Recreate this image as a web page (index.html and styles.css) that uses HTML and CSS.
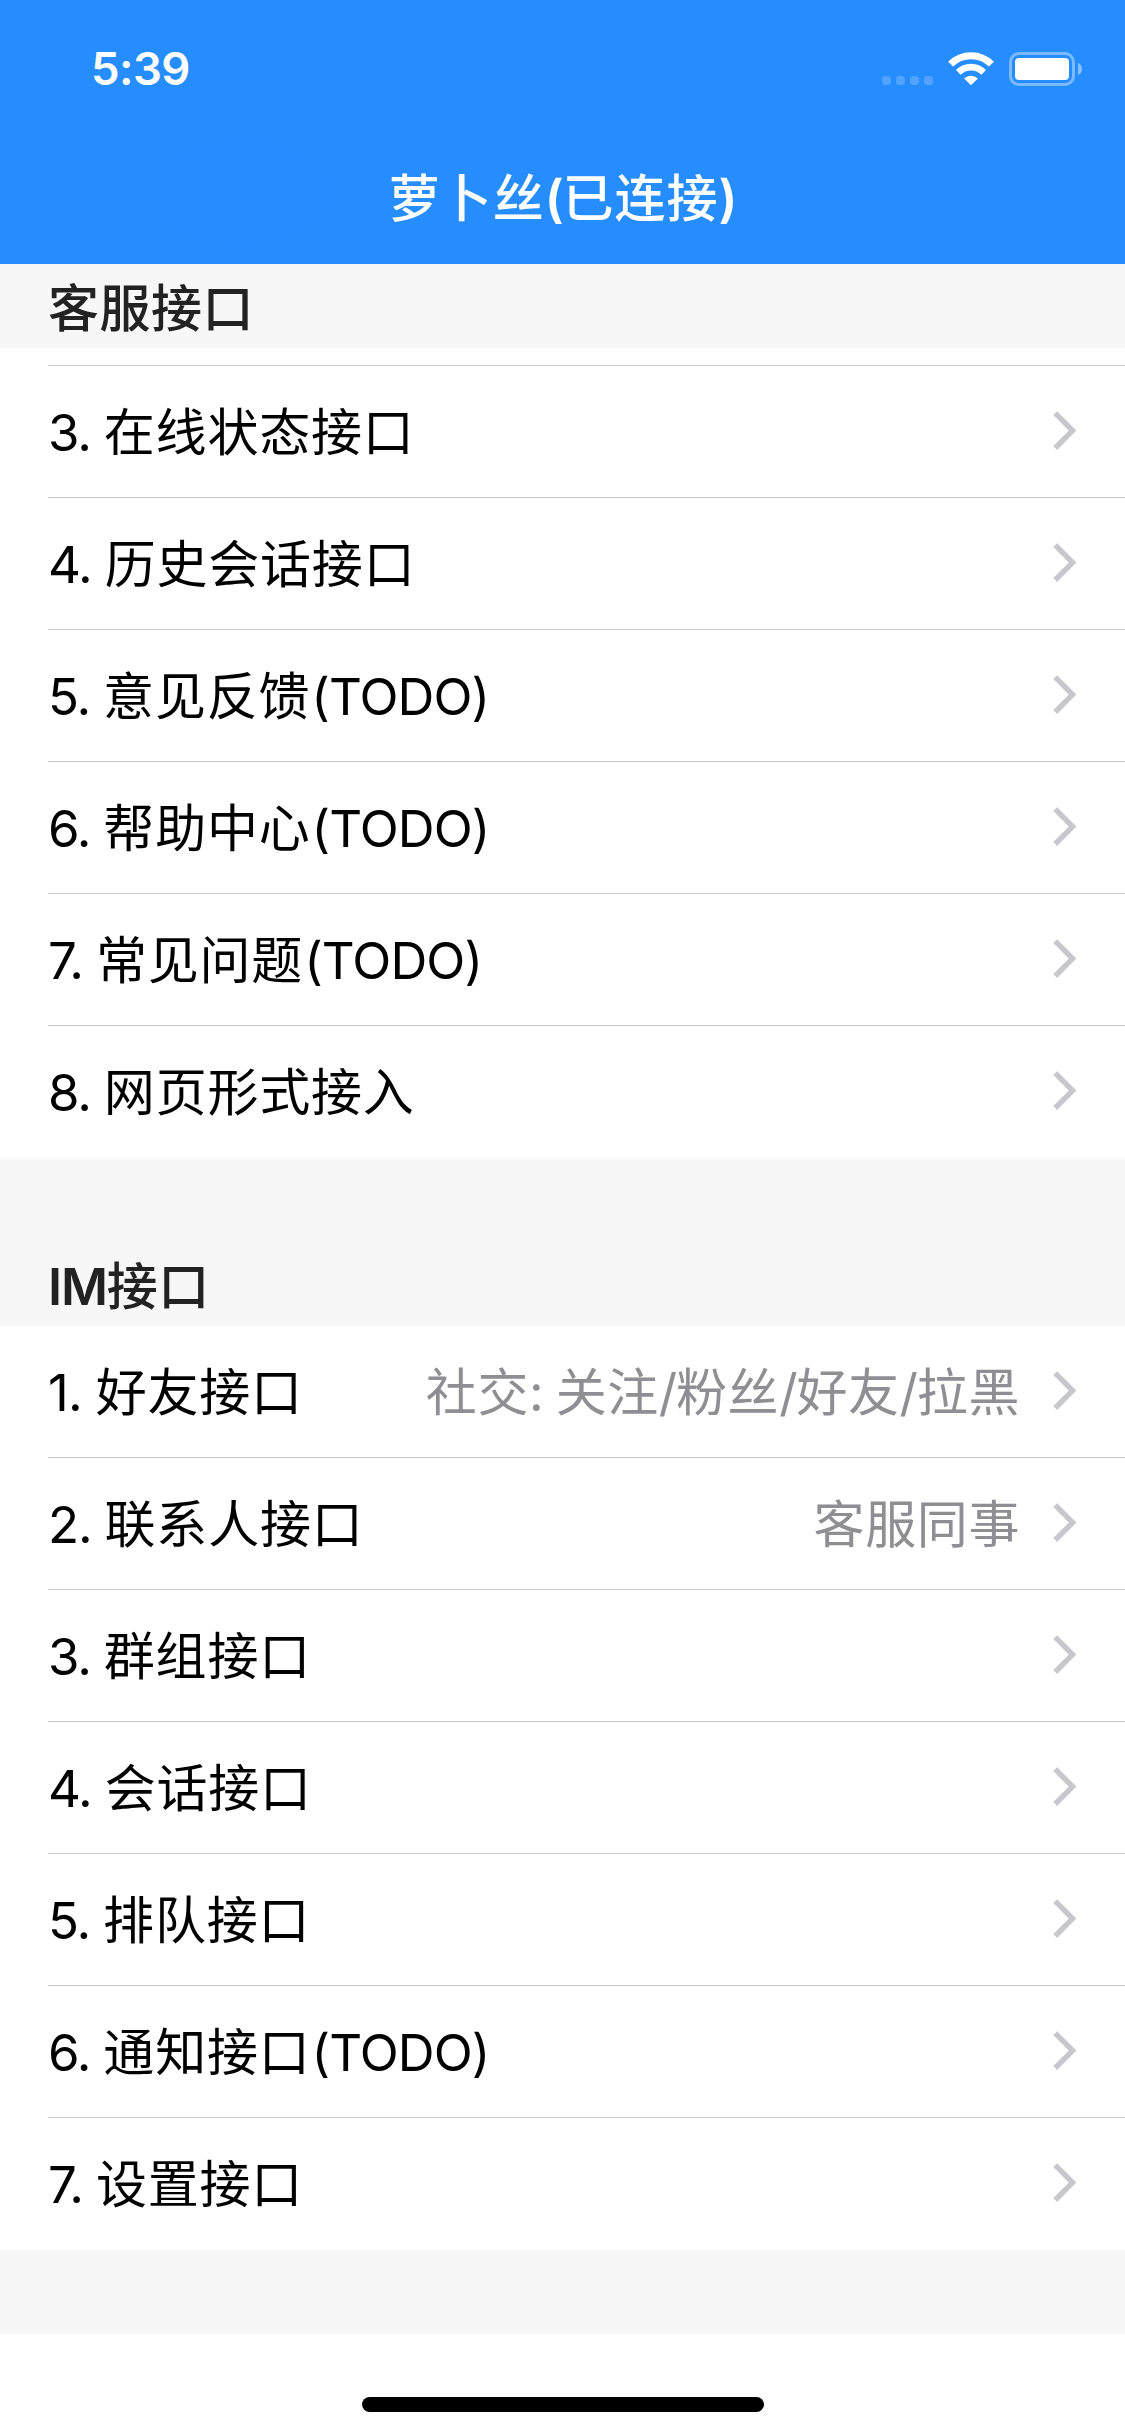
FILE: index.html
```html
<!DOCTYPE html>
<html lang="zh-CN">
<head>
<meta charset="utf-8">
<title>萝卜丝</title>
<link rel="stylesheet" href="styles.css">
</head>
<body>
<svg class="defs" width="0" height="0" aria-hidden="true">
  <symbol id="chevron" viewBox="0 0 24 40"><path d="M2.2 2.2 19.6 19.6 2.2 37" fill="none" stroke="currentColor" stroke-width="5.4"/></symbol>
</svg>
<div class="screen">
  <header class="navbar">
    <div class="status">
      <span class="time">5:39</span>
      <div class="indicators">
        <svg class="signal" width="51" height="9" viewBox="0 0 51 9"><g fill="#fff" fill-opacity=".2"><rect width="9" height="9" rx="3.6"/><rect x="14" width="9" height="9" rx="3.6"/><rect x="28" width="9" height="9" rx="3.6"/><rect x="42" width="9" height="9" rx="3.6"/></g></svg>
        <svg class="wifi" width="46" height="34" viewBox="0 0 46 34"><g fill="none" stroke="#fff"><path d="M2.6 12.1A28.8 28.8 0 0 1 43.4 12.1" stroke-width="7"/><path d="M10.3 20.3A18.2 18.2 0 0 1 35.7 20.3" stroke-width="6.6"/></g><path d="M23 33.3 16.1 26.5A10 10 0 0 1 29.9 26.5Z" fill="#fff"/></svg>
        <svg class="battery" width="74" height="34" viewBox="0 0 74 34"><rect x="1.5" y="1.5" width="63" height="31" rx="8.5" fill="none" stroke="#fff" stroke-opacity=".4" stroke-width="3"/><rect x="6" y="6" width="54" height="22" rx="4" fill="#fff"/><path d="M69 10.8c2.6 1.2 4 3.5 4 6.2s-1.400 5-4 6.200z" fill="#fff" fill-opacity=".45"/></svg>
      </div>
    </div>
    <h1 class="title"><span class="zh">萝卜丝</span>(<span class="zh">已连接</span>)</h1>
  </header>
  <main>
    <h2 class="section section-pinned"><span class="zh">客服接口</span></h2>
    <div class="row-tail"></div>
    <ul class="list">
      <li class="row"><span class="label">3. <span class="zh">在线状态接口</span></span><svg class="chevron"><use href="#chevron"/></svg></li>
      <li class="row"><span class="label">4. <span class="zh">历史会话接口</span></span><svg class="chevron"><use href="#chevron"/></svg></li>
      <li class="row"><span class="label">5. <span class="zh">意见反馈</span><span class="todo">(TODO)</span></span><svg class="chevron"><use href="#chevron"/></svg></li>
      <li class="row"><span class="label">6. <span class="zh">帮助中心</span><span class="todo">(TODO)</span></span><svg class="chevron"><use href="#chevron"/></svg></li>
      <li class="row"><span class="label">7. <span class="zh">常见问题</span><span class="todo">(TODO)</span></span><svg class="chevron"><use href="#chevron"/></svg></li>
      <li class="row"><span class="label">8. <span class="zh">网页形式接入</span></span><svg class="chevron"><use href="#chevron"/></svg></li>
    </ul>
    <h2 class="section">IM<span class="zh">接口</span></h2>
    <ul class="list">
      <li class="row"><span class="label"><span class="one">1. </span><span class="zh">好友接口</span></span><span class="detail"><span class="zh">社交</span>: <span class="zh">关注</span>/<span class="zh">粉丝</span>/<span class="zh">好友</span>/<span class="zh">拉黑</span></span><svg class="chevron"><use href="#chevron"/></svg></li>
      <li class="row"><span class="label">2. <span class="zh">联系人接口</span></span><span class="detail"><span class="zh">客服同事</span></span><svg class="chevron"><use href="#chevron"/></svg></li>
      <li class="row"><span class="label">3. <span class="zh">群组接口</span></span><svg class="chevron"><use href="#chevron"/></svg></li>
      <li class="row"><span class="label">4. <span class="zh">会话接口</span></span><svg class="chevron"><use href="#chevron"/></svg></li>
      <li class="row"><span class="label">5. <span class="zh">排队接口</span></span><svg class="chevron"><use href="#chevron"/></svg></li>
      <li class="row"><span class="label">6. <span class="zh">通知接口</span><span class="todo">(TODO)</span></span><svg class="chevron"><use href="#chevron"/></svg></li>
      <li class="row"><span class="label">7. <span class="zh">设置接口</span></span><svg class="chevron"><use href="#chevron"/></svg></li>
    </ul>
    <div class="section-footer"></div>
  </main>
  <div class="home-indicator"></div>
</div>
</body>
</html>
```
FILE: styles.css
```css
* { box-sizing: border-box; margin: 0; padding: 0; }

body {
  width: 1125px;
  background: #fff;
  color: #000;
  font: 400 51px/1 Inter, "Noto Sans CJK SC", sans-serif;
  letter-spacing: -1.2px;
}

.defs { display: block; }

.screen {
  display: flex;
  flex-direction: column;
  height: 2436px;
}

.zh { letter-spacing: 0.8px; }
.one { letter-spacing: -0.7px; }
.todo { margin-left: 1px; letter-spacing: -0.9px; }

/* Navigation bar */
.navbar {
  height: 264px;
  color: #fff;
  background:
    radial-gradient(ellipse 162px 92px at 242px 190px, #248cfe 30%, #268dff),
    #268dff;
}

.status {
  display: flex;
  justify-content: space-between;
  height: 132px;
  padding: 0 42px 0 91px;
}

.time {
  font-size: 45.5px;
  font-weight: 600;
  line-height: 138px;
  letter-spacing: -0.6px;
}

.indicators {
  display: flex;
  align-items: flex-start;
  padding-top: 52px;
}

.signal { margin: 24px 15px 0 0; }
.wifi { margin-right: 15px; }

.title {
  height: 132px;
  font-size: 51px;
  font-weight: 600;
  line-height: 134px;
  text-align: center;
}

.title .zh,
.section .zh { font-weight: 500; }

.title .zh { letter-spacing: 1px; }

/* Grouped list */
.section {
  height: 168px;
  padding: 84px 0 0 48px;
  background: #f7f7f7;
  color: #222;
  font-size: 51px;
  font-weight: 600;
  line-height: 90px;
}

.section .zh { letter-spacing: 0.5px; }

.section-pinned { height: 84px; padding-top: 0; }

.row-tail {
  height: 18px;
  margin-left: 48px;
  border-bottom: 1px solid #c8c7cc;
}

.list { list-style: none; }

.row {
  display: flex;
  align-items: flex-start;
  height: 132px;
  margin-left: 48px;
  padding-right: 48px;
  border-bottom: 1px solid #c8c7cc;
  line-height: 134px;
}

.row:last-child { border-bottom-color: transparent; }

.label { flex: 1; }
.detail { margin-right: 33px; color: #8e8e93; }
.detail .zh { letter-spacing: 0.6px; }

.chevron {
  width: 24px;
  height: 40px;
  margin-top: 45px;
  color: #c7c7cc;
}

.section-footer { height: 84px; background: #f7f7f7; }

.home-indicator {
  width: 402px;
  height: 15px;
  margin: 63px auto 0;
  border-radius: 7.5px;
  background: #000;
}
```
